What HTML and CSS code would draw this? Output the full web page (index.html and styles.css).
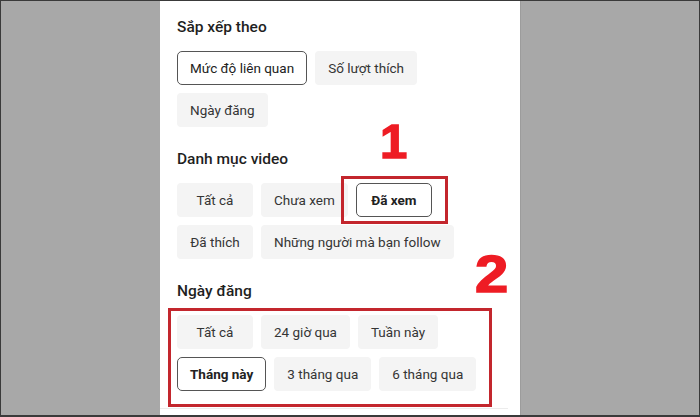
FILE: index.html
```html
<!DOCTYPE html>
<html lang="vi">
<head>
<meta charset="utf-8">
<title>Bộ lọc</title>
<link rel="stylesheet" href="styles.css">
</head>
<body>
<div class="screen">
  <div class="sheet">
    <section class="group">
      <h2 class="group-title">Sắp xếp theo</h2>
      <div class="chips">
        <span class="chip chip-selected">Mức độ liên quan</span>
        <span class="chip">Số lượt thích</span>
        <span class="chip">Ngày đăng</span>
      </div>
    </section>
    <section class="group">
      <h2 class="group-title">Danh mục video</h2>
      <div class="chips">
        <span class="chip">Tất cả</span>
        <span class="chip">Chưa xem</span>
        <span class="chip chip-selected chip-bold">Đã xem</span>
        <span class="chip">Đã thích</span>
        <span class="chip">Những người mà bạn follow</span>
      </div>
    </section>
    <section class="group">
      <h2 class="group-title">Ngày đăng</h2>
      <div class="chips">
        <span class="chip">Tất cả</span>
        <span class="chip">24 giờ qua</span>
        <span class="chip">Tuần này</span>
        <span class="chip chip-selected chip-bold">Tháng này</span>
        <span class="chip">3 tháng qua</span>
        <span class="chip">6 tháng qua</span>
      </div>
    </section>
    <div class="divider"></div>
  </div>

  <div class="mark mark-one"></div>
  <div class="mark mark-two"></div>
  <span class="step step-one">1</span>
  <span class="step step-two">2</span>
</div>
</body>
</html>
```

FILE: styles.css
```css
* { box-sizing: border-box; }

html, body {
  margin: 0;
  padding: 0;
}

body {
  background: #a8a8a8;
  font-family: Roboto, "Liberation Sans", Arial, sans-serif;
}

.screen {
  position: relative;
  width: 700px;
  height: 417px;
  display: flex;
  background: #a8a8a8;
  border: 1px solid #3a3a3a;
  border-bottom-width: 2px;
  overflow: hidden;
}

.sheet {
  margin-left: 159px;
  width: 360px;
  background: #ffffff;
  padding: 16px 0 0 17px;
  display: flex;
  flex-direction: column;
  box-shadow: 1px 0 0 #9c9c9c;
}

.group + .group {
  margin-top: 22px;
}

.group-title {
  margin: 0 0 14px;
  font-size: 15.5px;
  line-height: 20px;
  font-weight: 500;
  color: #1f1f1f;
}

.chips {
  display: flex;
  flex-wrap: wrap;
  gap: 8px;
  width: 326px;
}

.chip {
  height: 34px;
  min-width: 76px;
  padding: 0 12px;
  display: inline-flex;
  align-items: center;
  justify-content: center;
  font-size: 13.5px;
  color: #353535;
  background: #f4f4f4;
  border: 1px solid transparent;
  border-radius: 4px;
  white-space: nowrap;
}

.chip-selected {
  background: #ffffff;
  border-color: #555555;
  border-radius: 5px;
  color: #222222;
}

.chip-bold {
  font-weight: 700;
}

.divider {
  margin-top: 17px;
  margin-left: -17px;
  margin-right: 12px;
  height: 1px;
  background: #ececec;
}

.mark {
  position: absolute;
  border: 3px solid #c3262d;
}

.mark-one {
  left: 340px;
  top: 175px;
  width: 107px;
  height: 48px;
}

.mark-two {
  left: 167px;
  top: 307px;
  width: 324px;
  height: 99px;
}

.step {
  position: absolute;
  font-family: "Liberation Sans", Arial, sans-serif;
  font-weight: 700;
  line-height: 1;
  color: #ee1c24;
  -webkit-text-stroke: 1.5px #ee1c24;
}

.step-one {
  left: 379px;
  top: 116px;
  font-size: 49px;
}

.step-two {
  left: 474px;
  top: 247px;
  font-size: 52px;
  transform: scaleX(1.15);
  transform-origin: left top;
}
```
